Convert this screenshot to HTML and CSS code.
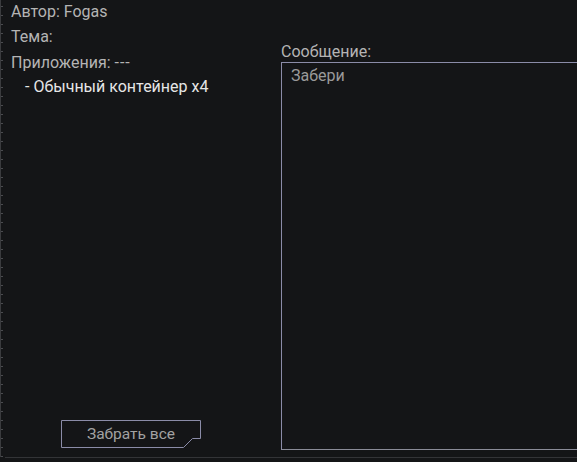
FILE: index.html
```html
<!DOCTYPE html>
<html lang="ru">
<head>
<meta charset="utf-8">
<link rel="stylesheet" href="styles.css">
</head>
<body>
<div class="screen">
  <div class="main">
    <div class="info">
      <div class="line l1">Автор: Fogas</div>
      <div class="line l2">Тема:</div>
      <div class="line l3">Приложения: <span class="dashes">---</span></div>
      <div class="line item">- Обычный контейнер x4</div>
      <button class="take">
        <svg class="take-frame" width="141" height="28" viewBox="0 0 141 28"><path d="M0.5 0.5 H139.5 V18.5 H131.5 L122.5 27.5 H0.5 Z" fill="none" stroke="#8b8ca8" stroke-width="1"/></svg>
        <span class="take-label">Забрать все</span>
      </button>
    </div>
    <div class="message">
      <div class="msg-label">Сообщение:</div>
      <div class="msg-box">Забери</div>
    </div>
  </div>
  <div class="rule"></div>
</div>
</body>
</html>
```
FILE: styles.css
```css
html, body {
  margin: 0;
  padding: 0;
  background: #141517;
}
body {
  font-family: Roboto, "Noto Sans", sans-serif;
  font-size: 16px;
  color: #b4b4b4;
  width: 577px;
  height: 462px;
  overflow: hidden;
}
.screen {
  display: flex;
  flex-direction: column;
  height: 462px;
}
.main {
  height: 457px;
  display: flex;
  border-left: 1px solid #3a3b3e;
  background-image: repeating-linear-gradient(to bottom, transparent 0, transparent 6px, #4a4b4f 6px, #4a4b4f 7px, transparent 7px, transparent 9px);
  background-size: 2px 100%;
  background-repeat: no-repeat;
  background-position: 0 0;
  overflow: hidden;
}
.info {
  width: 280px;
  display: flex;
  flex-direction: column;
  padding-left: 10px;
  box-sizing: border-box;
}
.line {
  line-height: 19px;
}
.l1 { margin-top: 2px; }
.l2 { margin-top: 6px; }
.l3 { margin-top: 7px; }
.dashes {
  letter-spacing: 1px;
}
.item {
  margin-top: 5px;
  padding-left: 14px;
  color: #e6e6e6;
}
.take {
  position: relative;
  margin-top: auto;
  margin-bottom: 9px;
  margin-left: 50px;
  width: 141px;
  height: 28px;
  padding: 0;
  background: transparent;
  border: none;
  font: inherit;
  color: #a2a2a2;
  display: flex;
  align-items: center;
  justify-content: center;
}
.take-frame {
  position: absolute;
  left: 0;
  top: 0;
}
.take-label {
  position: relative;
  font-size: 15.5px;
  margin-right: 1px;
}
.message {
  flex: 1;
  display: flex;
  flex-direction: column;
}
.msg-label {
  margin-top: 42px;
  line-height: 19px;
}
.msg-box {
  box-sizing: border-box;
  margin-top: 1px;
  height: 388px;
  border: 1px solid #8b8ca8;
  border-right: none;
  border-bottom-color: #8a8c98;
  padding: 3px 9px;
  color: #9a9a9a;
  line-height: 19px;
}
.rule {
  height: 1px;
  margin-left: 5px;
  background: #333437;
}
```
